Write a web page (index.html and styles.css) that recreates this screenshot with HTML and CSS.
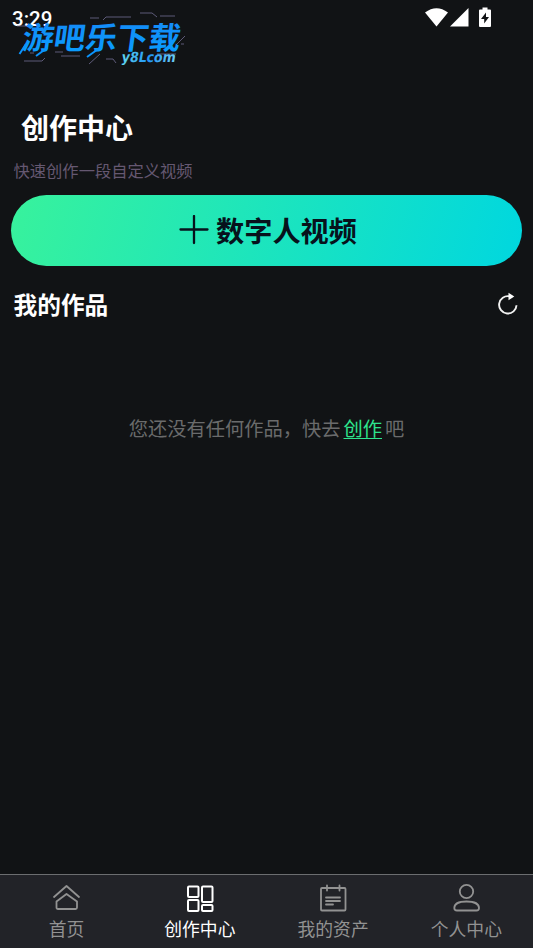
FILE: index.html
```html
<!DOCTYPE html>
<html lang="zh-CN">
<head>
<meta charset="utf-8">
<title>创作中心</title>
<link rel="stylesheet" href="styles.css">
</head>
<body>
<div class="app">
  <header class="status">
    <span class="time">3:29</span>
    <svg class="status-icons" width="70" height="22" viewBox="0 0 70 22" fill="#fff">
      <path d="M0 4.500Q11.500-4 23 4.500L11.500 18.500Z"/>
      <path d="M25 18.500H43.500V0Z"/>
      <path fill-rule="evenodd" d="M57.500-.500h5v2h2.500q1 0 1 1v15.500q0 1-1 1H55q-1 0-1-1V2.500q0-1 1-1h2.500zM61 4.500L56 11h3.200v4.500L64 9h-3z"/>
    </svg>
  </header>
  <svg class="brand" width="220" height="80" viewBox="0 0 220 80">
    <defs>
      <linearGradient id="blue" x1="0" y1="0" x2="0" y2="1"><stop offset="0" stop-color="#1786f5"/><stop offset="1" stop-color="#08a0ff"/></linearGradient>
      <linearGradient id="cyan" x1="0" x2="1"><stop offset="0" stop-color="#62d8ed"/><stop offset=".5" stop-color="#2095f5"/><stop offset="1" stop-color="#6ccdf4"/></linearGradient>
    </defs>
    <g fill="none" stroke="#77739a" stroke-width="1" opacity=".75">
      <path d="M103 20l3-3h25M140 13h12l5 4M160 16h15M90 18h9M17 26h12M24 61h18l3-3M30 53h4M61 56h19M89 64l11-10M106 59h7l3 4M176 45l9-9M181 44h3M55 52h8M157 54h19"/>
    </g>
    <text class="brand-name" fill="url(#blue)" transform="translate(21 49) skewX(-8) scale(1 .9)" textLength="158" lengthAdjust="spacingAndGlyphs">游吧乐下载</text>
    <path d="M26 44L19.500 54M47 48L36 56M101 47L87 57" stroke="#0b94fc" stroke-width="2" fill="none"/>
    <text class="brand-url" transform="translate(121 61.500) skewX(-10)" textLength="54" lengthAdjust="spacingAndGlyphs" fill="url(#cyan)">y8Lcom</text>
  </svg>
  <main>
    <h1>创作中心</h1>
    <p class="sub">快速创作一段自定义视频</p>
    <button class="create">
      <svg width="30" height="30" viewBox="0 0 30 30" fill="none" stroke="#07121c" stroke-width="2.300" stroke-linecap="round"><path d="M1.500 14.500H28.500M15 1V28"/></svg>
      <span>数字人视频</span>
    </button>
    <div class="section">
      <h2>我的作品</h2>
      <svg width="22" height="24" viewBox="0 0 22 24"><path d="M12.500 4.300A8.700 8.700 0 1 0 19.500 13.200" fill="none" stroke="#f2f2f2" stroke-width="1.900"/><path d="M11.500 .800L17.300 4.500L11.500 8.300Z" fill="#fff"/></svg>
    </div>
    <p class="empty">您还没有任何作品，快去<a>创作</a>吧</p>
  </main>
  <nav>
    <div class="tab">
      <svg width="30" height="30" viewBox="0 0 30 30"><path d="M2 14L14.500 3L27 14M4.500 18.500L14.500 11L25 18.500V24.500Q25 26 23.500 26H6Q4.500 26 4.500 24.500Z"/></svg>
      <span>首页</span>
    </div>
    <div class="tab active">
      <svg width="30" height="30" viewBox="0 0 30 30"><rect x="3" y="3.500" width="10.500" height="10.500" rx="1"/><rect x="17" y="3.500" width="10.500" height="15.500" rx="1"/><rect x="3" y="17" width="10.500" height="11" rx="1"/><rect x="17" y="22" width="10.500" height="6" rx="1"/></svg>
      <span>创作中心</span>
    </div>
    <div class="tab">
      <svg width="30" height="30" viewBox="0 0 30 30"><rect x="3" y="5" width="24.500" height="22.500" rx="1"/><path d="M9 2.500V7.500M21.500 2.500V7.500M8 14.500H22M8 18H22M8 21.500H15"/></svg>
      <span>我的资产</span>
    </div>
    <div class="tab">
      <svg width="30" height="30" viewBox="0 0 30 30"><circle cx="15.500" cy="8.500" r="6.700"/><path d="M3.300 25C3.300 20.500 8.500 18.500 15.500 18.500S28 20.500 28 25Q28 27.500 25.500 27.500H6Q3.300 27.500 3.300 25Z"/></svg>
      <span>个人中心</span>
    </div>
  </nav>
</div>
</body>
</html>
```
FILE: styles.css
```css
* { box-sizing: border-box; }
body {
  margin: 0;
  background: #111315;
  color: #fff;
  font-family: "Noto Sans CJK SC", sans-serif;
}
.app { position: relative; display: flex; flex-direction: column; height: 948px; overflow: hidden; }
.status { display: flex; justify-content: space-between; height: 40px; padding: 8px 38px 0 12px; }
.time { font: 500 20.500px/22px Roboto, sans-serif; }
.status-icons { overflow: visible; }
.brand { position: absolute; left: 0; top: 0; overflow: visible; }
.brand-name { font-size: 34px; font-weight: 700; }
.brand-url { font: bold 14px "DejaVu Sans", sans-serif; }
main { flex: 1; padding: 67px 11px 0; }
h1, h2, p { margin: 0; }
h1 { padding-left: 10px; font-size: 28px; line-height: 40px; font-weight: 700; }
.sub { margin-top: 11px; padding-left: 2.500px; font-size: 16.300px; line-height: 24px; color: #655871; }
.create {
  display: flex; align-items: center; justify-content: center; gap: 7px;
  width: 511px; height: 71px; margin-top: 12.500px; padding: 0 0 0 3px;
  border: 0; border-radius: 36px;
  background: linear-gradient(105deg, #38f29c, #00d7df);
  color: #07121c; font: 700 28.200px/40px "Noto Sans CJK SC", sans-serif;
}
.section { display: flex; align-items: center; justify-content: space-between; height: 36px; margin-top: 20.500px; padding: 0 3px 0 2.500px; }
h2 { font-size: 23.700px; line-height: 36px; }
.empty { margin-top: 91px; text-align: center; font-size: 19.250px; line-height: 30px; color: #6a6b6c; }
.empty a { margin: 0 3px; color: #2ee58d; text-decoration: underline; text-underline-offset: 2px; text-decoration-thickness: 1px; }
nav { display: grid; grid-template-columns: repeat(4, 1fr); height: 74px; border-top: 1px solid #6c6e70; background: #222328; }
.tab { display: flex; flex-direction: column; align-items: center; padding-top: 8px; color: #929292; font-size: 17.800px; line-height: 26px; }
.tab svg { margin-bottom: 2px; fill: none; stroke: currentColor; stroke-width: 1.800; stroke-linejoin: round; stroke-linecap: round; }
.tab.active { color: #fff; }
.tab.active svg { stroke-width: 2; }
```
